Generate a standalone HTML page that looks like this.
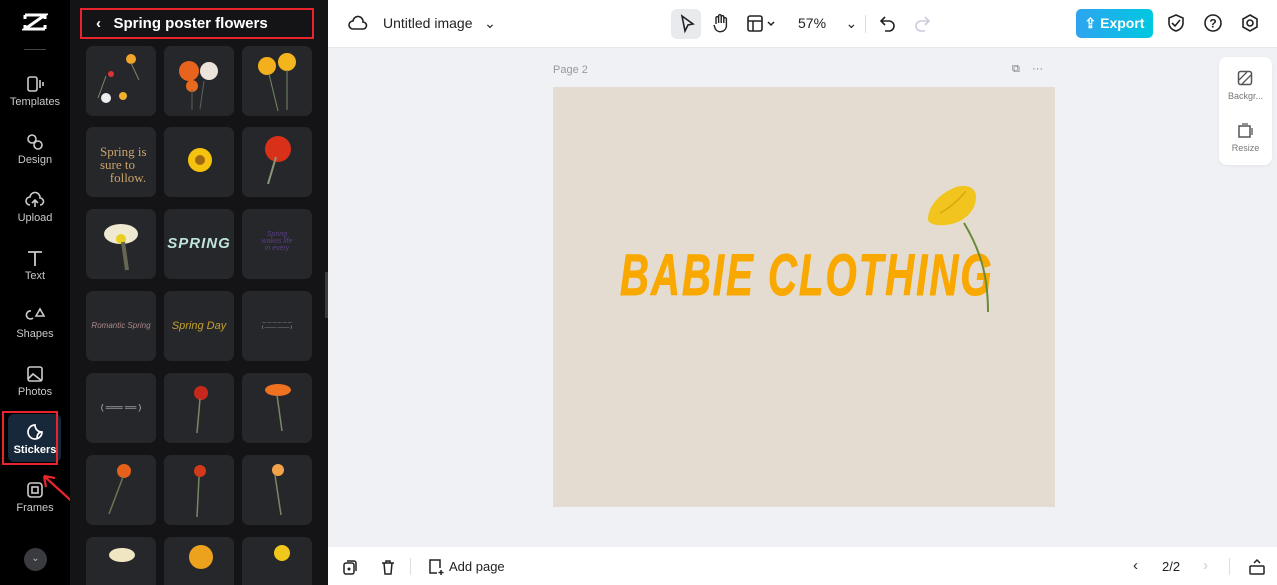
<!DOCTYPE html>
<html><head><meta charset="utf-8"><style>
*{margin:0;padding:0;box-sizing:border-box}
html,body{width:1277px;height:585px;overflow:hidden}
body{font-family:"Liberation Sans",sans-serif;background:#eff1f5;position:relative}
.side{position:absolute;left:0;top:0;width:70px;height:585px;background:#000}
.nav{position:absolute;left:0;width:70px;text-align:center;color:#c9c9c9;font-size:11px}
.nav svg{display:block;margin:0 auto 3px}
.panel{position:absolute;left:70px;top:0;width:258px;height:585px;background:#141417;overflow:hidden}
.tile{position:absolute;width:70px;height:70px;background:#26272b;border-radius:7px;overflow:hidden}
.top{position:absolute;left:328px;top:0;width:949px;height:48px;background:#fff;border-bottom:1px solid #e6e8ec}
.bot{position:absolute;left:328px;top:547px;width:949px;height:38px;background:#fff}
.ic{position:absolute}
</style></head><body>
<div class="side">
 <svg class="ic" style="left:22px;top:12px" width="26" height="20" viewBox="0 0 26 20"><path d="M3 3h20L3 17h20" fill="none" stroke="#fff" stroke-width="3"/><path d="M3 3v4M23 3v4M3 13v4M23 13v4" stroke="#fff" stroke-width="3"/></svg>
 <div style="position:absolute;left:24px;top:49px;width:22px;height:1px;background:#444"></div>
 <div class="nav" style="top:75px"><svg width="20" height="18" viewBox="0 0 20 18"><rect x="3" y="2" width="9" height="14" rx="2" fill="none" stroke="#ccc" stroke-width="1.6"/><path d="M15 5v8M18 7v4" stroke="#ccc" stroke-width="1.6"/></svg>Templates</div>
 <div class="nav" style="top:133px"><svg width="20" height="18" viewBox="0 0 20 18"><circle cx="7" cy="6" r="4" fill="none" stroke="#ccc" stroke-width="1.6"/><circle cx="13" cy="12" r="4" fill="none" stroke="#ccc" stroke-width="1.6"/></svg>Design</div>
 <div class="nav" style="top:191px"><svg width="20" height="18" viewBox="0 0 20 18"><path d="M5 14a4 4 0 0 1 0-8 5 5 0 0 1 10 1 3.5 3.5 0 0 1 0 7M10 9v7M7 12l3-3 3 3" fill="none" stroke="#ccc" stroke-width="1.6"/></svg>Upload</div>
 <div class="nav" style="top:249px"><svg width="20" height="18" viewBox="0 0 20 18"><path d="M3 3h14M10 3v14" stroke="#ccc" stroke-width="1.8"/></svg>Text</div>
 <div class="nav" style="top:307px"><svg width="20" height="18" viewBox="0 0 20 18"><path d="M6 4a4 4 0 1 0 2 7M11 9l4-7 4 7z" fill="none" stroke="#ccc" stroke-width="1.6"/></svg>Shapes</div>
 <div class="nav" style="top:365px"><svg width="20" height="18" viewBox="0 0 20 18"><rect x="3" y="2" width="14" height="14" rx="2" fill="none" stroke="#ccc" stroke-width="1.6"/><path d="M3 14l5-5 9 7" fill="none" stroke="#ccc" stroke-width="1.6"/></svg>Photos</div>
 <div style="position:absolute;left:8px;top:414px;width:53px;height:48px;background:#17283a;border-radius:6px"></div>
 <div style="position:absolute;left:2px;top:411px;width:56px;height:54px;border:2px solid #e8242c"></div>
 <div class="nav" style="top:423px;color:#fff;font-weight:bold"><svg width="20" height="18" viewBox="0 0 20 18"><path d="M17 9a7 7 0 1 1-7-7c0 4 3 7 7 7zM17 9c-3 0-5 2-5 7" fill="none" stroke="#fff" stroke-width="1.7"/></svg>Stickers</div>
 <svg class="ic" style="left:40px;top:472px" width="40" height="36" viewBox="0 0 40 36"><path d="M37 34L4 4M4 4l11 2M4 4l2 11" fill="none" stroke="#e8242c" stroke-width="2.2"/></svg>
 <div class="nav" style="top:481px"><svg width="20" height="18" viewBox="0 0 20 18"><rect x="3" y="2" width="14" height="14" rx="3" fill="none" stroke="#ccc" stroke-width="1.6"/><rect x="7" y="6" width="6" height="6" fill="none" stroke="#ccc" stroke-width="1.6"/></svg>Frames</div>
 <div style="position:absolute;left:24px;top:548px;width:23px;height:23px;border-radius:50%;background:#3a3b3f;color:#bbb;font-size:10px;text-align:center;line-height:22px">⌄</div>
</div>
<div class="panel">
 <div style="position:absolute;left:10px;top:8px;width:234px;height:31px;border:2px solid #e8242c;color:#fff;font-weight:bold;font-size:15px;line-height:27px;padding-left:14px">‹&nbsp;&nbsp;&nbsp;Spring poster flowers</div>
 <div class="tile" style="left:16px;top:46px"><svg width="70" height="70"><circle cx="45" cy="13" r="5" fill="#f1a52a"/><circle cx="37" cy="50" r="4" fill="#f0b030"/><circle cx="20" cy="52" r="5" fill="#eee"/><circle cx="25" cy="28" r="3" fill="#d33"/><path d="M45 17l8 17M20 30l-8 22" stroke="#786" /></svg></div>
 <div class="tile" style="left:94px;top:46px"><svg width="70" height="70"><circle cx="25" cy="25" r="10" fill="#e8641e"/><circle cx="45" cy="25" r="9" fill="#ece4da"/><circle cx="28" cy="40" r="6" fill="#e86a1e"/><path d="M28 44v20M40 35l-4 28" stroke="#565"/></svg></div>
 <div class="tile" style="left:172px;top:46px"><svg width="70" height="70"><circle cx="25" cy="20" r="9" fill="#f3b01c"/><circle cx="45" cy="16" r="9" fill="#f3b51c"/><path d="M27 28l9 37M45 24l0 40" stroke="#786"/></svg></div>
 <div class="tile" style="left:16px;top:127px;color:#c9a36a;font-family:'Liberation Serif',serif;font-size:13px;line-height:13px;padding:18px 0 0 14px">Spring is<br>sure to<br>&nbsp;&nbsp;&nbsp;follow.</div>
 <div class="tile" style="left:94px;top:127px"><svg width="70" height="70"><circle cx="36" cy="33" r="12" fill="#f4c20f"/><circle cx="36" cy="33" r="5" fill="#a06a10"/></svg></div>
 <div class="tile" style="left:172px;top:127px"><svg width="70" height="70"><circle cx="36" cy="22" r="13" fill="#d9301a"/><path d="M34 30l-8 27" stroke="#897" stroke-width="2"/></svg></div>
 <div class="tile" style="left:16px;top:209px"><svg width="70" height="70"><ellipse cx="35" cy="25" rx="17" ry="10" fill="#eee9d0"/><circle cx="35" cy="30" r="5" fill="#e9d020"/><path d="M37 33l4 28" stroke="#665" stroke-width="4"/></svg></div>
 <div class="tile" style="left:94px;top:209px;color:#bfe4dc;font-weight:bold;font-style:italic;font-size:15px;text-align:center;line-height:70px;letter-spacing:1px">SPRING</div>
 <div class="tile" style="left:172px;top:209px;color:#5a3f80;font-style:italic;font-size:7px;text-align:center;padding-top:22px">Spring<br>wakes life<br>in every</div>
 <div class="tile" style="left:16px;top:291px;color:#a88;font-style:italic;font-size:8px;text-align:center;line-height:70px">Romantic Spring</div>
 <div class="tile" style="left:94px;top:291px;color:#c6a12a;font-style:italic;font-size:11px;text-align:center;line-height:70px">Spring Day</div>
 <div class="tile" style="left:172px;top:291px;color:#ccc;font-size:4px;text-align:center;padding-top:28px">— — — — — —<br>( ——— ——— )</div>
 <div class="tile" style="left:16px;top:373px;color:#ccc;font-size:8px;text-align:center;line-height:70px">( ═══ ══ )</div>
 <div class="tile" style="left:94px;top:373px"><svg width="70" height="70"><circle cx="37" cy="20" r="7" fill="#c8281c"/><path d="M36 26l-3 34" stroke="#786" stroke-width="1.5"/></svg></div>
 <div class="tile" style="left:172px;top:373px"><svg width="70" height="70"><ellipse cx="36" cy="17" rx="13" ry="6" fill="#ef7220"/><path d="M35 22l5 36" stroke="#786" stroke-width="1.5"/></svg></div>
 <div class="tile" style="left:16px;top:455px"><svg width="70" height="70"><circle cx="38" cy="16" r="7" fill="#e5601a"/><path d="M37 22l-14 37" stroke="#675" stroke-width="1.5"/></svg></div>
 <div class="tile" style="left:94px;top:455px"><svg width="70" height="70"><circle cx="36" cy="16" r="6" fill="#d23a1a"/><path d="M35 22l-2 40" stroke="#786" stroke-width="1.5"/></svg></div>
 <div class="tile" style="left:172px;top:455px"><svg width="70" height="70"><circle cx="36" cy="15" r="6" fill="#f3a24a"/><path d="M33 20l6 40" stroke="#786" stroke-width="1.5"/></svg></div>
 <div class="tile" style="left:16px;top:537px"><svg width="70" height="70"><ellipse cx="36" cy="18" rx="13" ry="7" fill="#f1e6c2"/></svg></div>
 <div class="tile" style="left:94px;top:537px"><svg width="70" height="70"><circle cx="37" cy="20" r="12" fill="#eda21e"/></svg></div>
 <div class="tile" style="left:172px;top:537px"><svg width="70" height="70"><circle cx="40" cy="16" r="8" fill="#f0c81c"/></svg></div>
 <div style="position:absolute;left:255px;top:272px;width:6px;height:46px;background:#3a3b3f;border-radius:0 4px 4px 0"></div>
</div>
<div class="top">
 <svg class="ic" style="left:20px;top:15px" width="20" height="18" viewBox="0 0 20 18"><path d="M5 14a4 4 0 0 1 0-8 5 5 0 0 1 10 1 3.5 3.5 0 0 1 0 7z" fill="none" stroke="#222" stroke-width="1.6"/></svg>
 <div style="position:absolute;left:55px;top:15px;font-size:14px;color:#222">Untitled image&nbsp;&nbsp;&nbsp;⌄</div>
 <div style="position:absolute;left:343px;top:9px;width:30px;height:30px;background:#e8eaee;border-radius:6px"></div>
 <svg class="ic" style="left:350px;top:14px" width="18" height="20" viewBox="0 0 18 20"><path d="M4 2l11 8-5 1-3 6z" fill="none" stroke="#222" stroke-width="1.6"/></svg>
 <svg class="ic" style="left:383px;top:13px" width="18" height="20" viewBox="0 0 18 20"><path d="M5 11V5a1.3 1.3 0 0 1 2.6 0V10V3a1.3 1.3 0 0 1 2.6 0v7V4a1.3 1.3 0 0 1 2.6 0v6V6a1.3 1.3 0 0 1 2.6 0v7a6 6 0 0 1-11 3L3 12" fill="none" stroke="#222" stroke-width="1.4"/></svg>
 <svg class="ic" style="left:419px;top:15px" width="30" height="18" viewBox="0 0 30 18"><rect x="1" y="1" width="14" height="15" rx="2" fill="none" stroke="#222" stroke-width="1.6"/><path d="M1 6h14M6 6v10M21 7l3 3 3-3" fill="none" stroke="#222" stroke-width="1.5"/></svg>
 <div style="position:absolute;left:470px;top:15px;font-size:14px;color:#222">57%&nbsp;&nbsp;&nbsp;&nbsp;&nbsp;⌄</div>
 <div style="position:absolute;left:537px;top:15px;width:1px;height:18px;background:#ddd"></div>
 <svg class="ic" style="left:550px;top:14px" width="20" height="20" viewBox="0 0 20 20"><path d="M7 3L3 7l4 4M3 7h8a5 5 0 0 1 0 10H7" fill="none" stroke="#222" stroke-width="1.6"/></svg>
 <svg class="ic" style="left:584px;top:14px" width="20" height="20" viewBox="0 0 20 20"><path d="M13 3l4 4-4 4M17 7H9a5 5 0 0 0 0 10h4" fill="none" stroke="#ccd" stroke-width="1.6"/></svg>
 <div style="position:absolute;left:748px;top:9px;width:77px;height:29px;border-radius:5px;background:linear-gradient(90deg,#2ea4f0,#00c8e0);color:#fff;font-weight:bold;font-size:14px;line-height:29px;text-align:center">⇪ Export</div>
 <svg class="ic" style="left:838px;top:13px" width="20" height="20" viewBox="0 0 20 20"><path d="M10 2l7 3v5c0 4-3 7-7 8-4-1-7-4-7-8V5z M6 10l3 3 5-6" fill="none" stroke="#222" stroke-width="1.6"/></svg>
 <svg class="ic" style="left:875px;top:13px" width="20" height="20" viewBox="0 0 20 20"><circle cx="10" cy="10" r="8" fill="none" stroke="#222" stroke-width="1.6"/><text x="10" y="14.5" font-size="12" text-anchor="middle" font-family="Liberation Sans" font-weight="bold" fill="#222">?</text></svg>
 <svg class="ic" style="left:912px;top:13px" width="20" height="20" viewBox="0 0 20 20"><path d="M10 2l7 4v8l-7 4-7-4V6z" fill="none" stroke="#222" stroke-width="1.6"/><circle cx="10" cy="10" r="3" fill="none" stroke="#222" stroke-width="1.6"/></svg>
</div>
<div style="position:absolute;left:553px;top:64px;font-size:11px;color:#999">Page 2</div>
<div style="position:absolute;left:1012px;top:63px;font-size:11px;color:#777">⧉&nbsp;&nbsp;&nbsp;&nbsp;···</div>
<div style="position:absolute;left:553px;top:87px;width:502px;height:420px;background:#e5dcd1"></div>
<div style="position:absolute;left:620px;top:247px;font-weight:bold;font-style:italic;font-size:58px;line-height:58px;color:#f9a800;letter-spacing:3px;transform:scaleX(0.69);transform-origin:left top;white-space:nowrap;-webkit-text-stroke:1px #f9a800">BABIE CLOTHING</div>
<svg class="ic" style="left:920px;top:183px" width="80" height="132" viewBox="0 0 80 132"><path d="M44 40c15 25 24 50 24 89" fill="none" stroke="#6a8a3a" stroke-width="2"/><path d="M8 36c0-13 12-26 28-32 10-3 20 0 20 10 0 14-12 26-30 28-10 1-18-1-18-6z" fill="#f1c51e"/><path d="M20 30c8-4 18-12 26-22" stroke="#d9a810" stroke-width="1.5" fill="none"/></svg>
<div style="position:absolute;left:1219px;top:57px;width:53px;height:108px;background:#fff;border-radius:8px;box-shadow:0 1px 3px rgba(0,0,0,.06)">
 <svg class="ic" style="left:18px;top:13px" width="16" height="16" viewBox="0 0 16 16"><rect x="1.5" y="1.5" width="13" height="13" rx="2" fill="none" stroke="#555" stroke-width="1.5"/><path d="M2 10l8-8M5 14l9-9" stroke="#555" stroke-width="1.3"/></svg>
 <div style="position:absolute;top:34px;width:53px;text-align:center;font-size:9px;color:#777">Backgr...</div>
 <svg class="ic" style="left:18px;top:66px" width="16" height="16" viewBox="0 0 16 16"><rect x="2" y="3" width="11" height="11" fill="none" stroke="#555" stroke-width="1.5"/><path d="M5 1h6M15 5v7" stroke="#555" stroke-width="1.3"/></svg>
 <div style="position:absolute;top:86px;width:53px;text-align:center;font-size:9px;color:#777">Resize</div>
</div>
<div class="bot">
 <svg class="ic" style="left:14px;top:12px" width="16" height="16" viewBox="0 0 16 16"><rect x="2" y="4" width="10" height="11" rx="2" fill="none" stroke="#222" stroke-width="1.5"/><path d="M5 2h7a2 2 0 0 1 2 2v8" fill="none" stroke="#222" stroke-width="1.5"/><circle cx="7" cy="10" r="1.5" fill="#222"/></svg>
 <svg class="ic" style="left:52px;top:12px" width="16" height="16" viewBox="0 0 16 16"><path d="M2 4h12M6 4V2h4v2M4 4l1 11h6l1-11" fill="none" stroke="#222" stroke-width="1.5"/></svg>
 <div style="position:absolute;left:82px;top:11px;width:1px;height:17px;background:#ddd"></div>
 <svg class="ic" style="left:99px;top:11px" width="18" height="18" viewBox="0 0 18 18"><path d="M10 15H3V2h10v8M14 12v5M11.5 14.5h5" fill="none" stroke="#222" stroke-width="1.5"/></svg>
 <div style="position:absolute;left:121px;top:12px;font-size:13px;color:#222">Add page</div>
 <div style="position:absolute;left:805px;top:10px;font-size:15px;color:#222">‹</div>
 <div style="position:absolute;left:834px;top:12px;font-size:13px;color:#222">2/2</div>
 <div style="position:absolute;left:875px;top:10px;font-size:15px;color:#ccc">›</div>
 <div style="position:absolute;left:901px;top:11px;width:1px;height:17px;background:#ddd"></div>
 <svg class="ic" style="left:920px;top:11px" width="18" height="18" viewBox="0 0 18 18"><rect x="2" y="8" width="14" height="8" rx="1" fill="none" stroke="#222" stroke-width="1.5"/><path d="M6 5l3-3 3 3" fill="none" stroke="#222" stroke-width="1.5"/></svg>
</div>
</body></html>
